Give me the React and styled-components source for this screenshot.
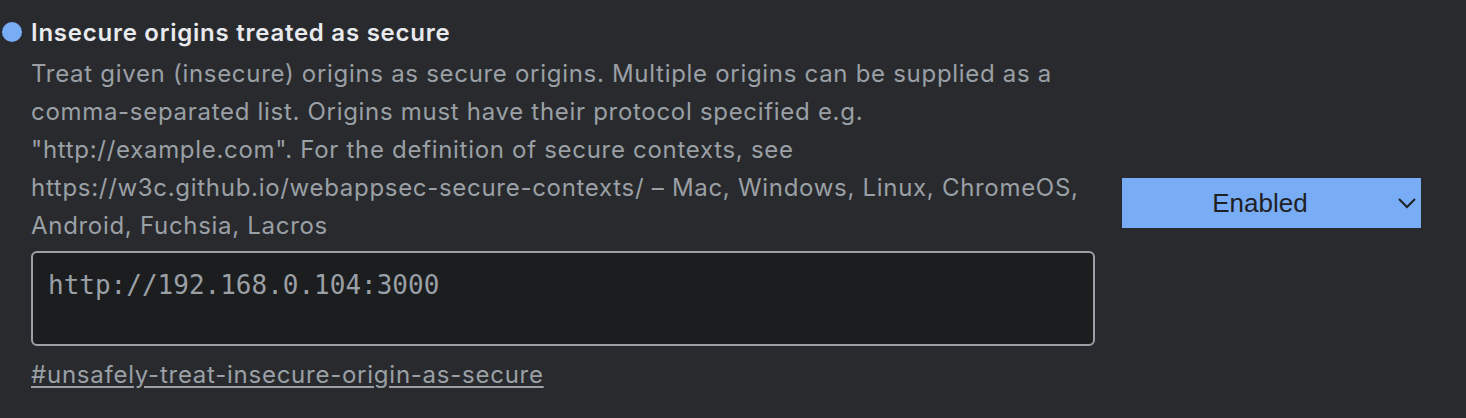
import styled, { createGlobalStyle } from "styled-components";

const GlobalStyle = createGlobalStyle`
  html, body {
    margin: 0;
    padding: 0;
    background: #292a2d;
  }
  body {
    font-family: Inter, "Noto Sans", sans-serif;
  }
`;

const Page = styled.div`
  width: 1466px;
  height: 418px;
  background: #292a2d;
  box-sizing: border-box;
  padding: 12px 45px 0 2px;
`;

const Experiment = styled.section`
  display: flex;
  align-items: center;
  gap: 27px;
`;

const Main = styled.div`
  width: 1093px;
  flex-shrink: 0;
`;

const TitleRow = styled.div`
  display: flex;
  align-items: center;
  gap: 9px;
  height: 40px;
`;

const Dot = styled.span`
  width: 20px;
  height: 20px;
  border-radius: 50%;
  background: ${(p) => p.color || "#78acf4"};
  flex-shrink: 0;
`;

const Title = styled.h3`
  margin: 0;
  font-size: 24px;
  font-weight: 600;
  color: #e8eaed;
  letter-spacing: 0.75px;
`;

const Body = styled.div`
  padding-left: 29px;
`;

const Description = styled.p`
  margin: 3px 0 0;
  font-size: 24px;
  line-height: 38px;
  letter-spacing: 0.7px;
  color: #9aa0a6;
  width: 1064px;
`;

const OriginInput = styled.textarea`
  display: block;
  box-sizing: border-box;
  width: 1064px;
  height: 95px;
  margin-top: 6px;
  padding: 14px 15px;
  background: #1c1d1f;
  border: 2px solid #9aa0a6;
  border-radius: 6px;
  color: #9aa0a6;
  font-family: "DejaVu Sans Mono", "Liberation Mono", monospace;
  font-size: 26px;
  line-height: 36px;
  resize: none;
  outline: none;
`;

const Permalink = styled.a`
  display: inline-block;
  margin-top: 10px;
  font-size: 24px;
  line-height: 38px;
  letter-spacing: 0.75px;
  color: #9aa0a6;
  text-decoration: underline;
  text-underline-offset: 3px;
`;

const SelectBox = styled.div`
  position: relative;
  width: 299px;
  height: 50px;
  background: #78acf4;
  display: flex;
  align-items: center;
  justify-content: center;
  padding-right: 23px;
  box-sizing: border-box;
  font-family: "Liberation Sans", Arial, sans-serif;
  font-size: 26px;
  color: #202124;
  cursor: pointer;
`;

const Chevron = styled.svg`
  position: absolute;
  right: 4px;
  top: 50%;
  margin-top: -7px;
`;

export default function App() {
  return (
    <>
      <GlobalStyle />
      <Page>
        <Experiment>
          <Main>
            <TitleRow>
              <Dot />
              <Title>Insecure origins treated as secure</Title>
            </TitleRow>
            <Body>
              <Description>
                Treat given (insecure) origins as secure origins. Multiple
                origins can be supplied as a comma-separated list. Origins
                must have their protocol specified e.g. "http://example.com".
                For the definition of secure contexts, see
                https://w3c.github.io/webappsec-secure-contexts/ – Mac,
                Windows, Linux, ChromeOS, Android, Fuchsia, Lacros
              </Description>
              <OriginInput defaultValue="http://192.168.0.104:3000" />
              <Permalink href="#unsafely-treat-insecure-origin-as-secure">
                #unsafely-treat-insecure-origin-as-secure
              </Permalink>
            </Body>
          </Main>
          <SelectBox>
            Enabled
            <Chevron width="20" height="14" viewBox="0 0 20 14">
              <path
                d="M2 3 L10 11 L18 3"
                fill="none"
                stroke="#202124"
                strokeWidth="2"
              />
            </Chevron>
          </SelectBox>
        </Experiment>
      </Page>
    </>
  );
}
